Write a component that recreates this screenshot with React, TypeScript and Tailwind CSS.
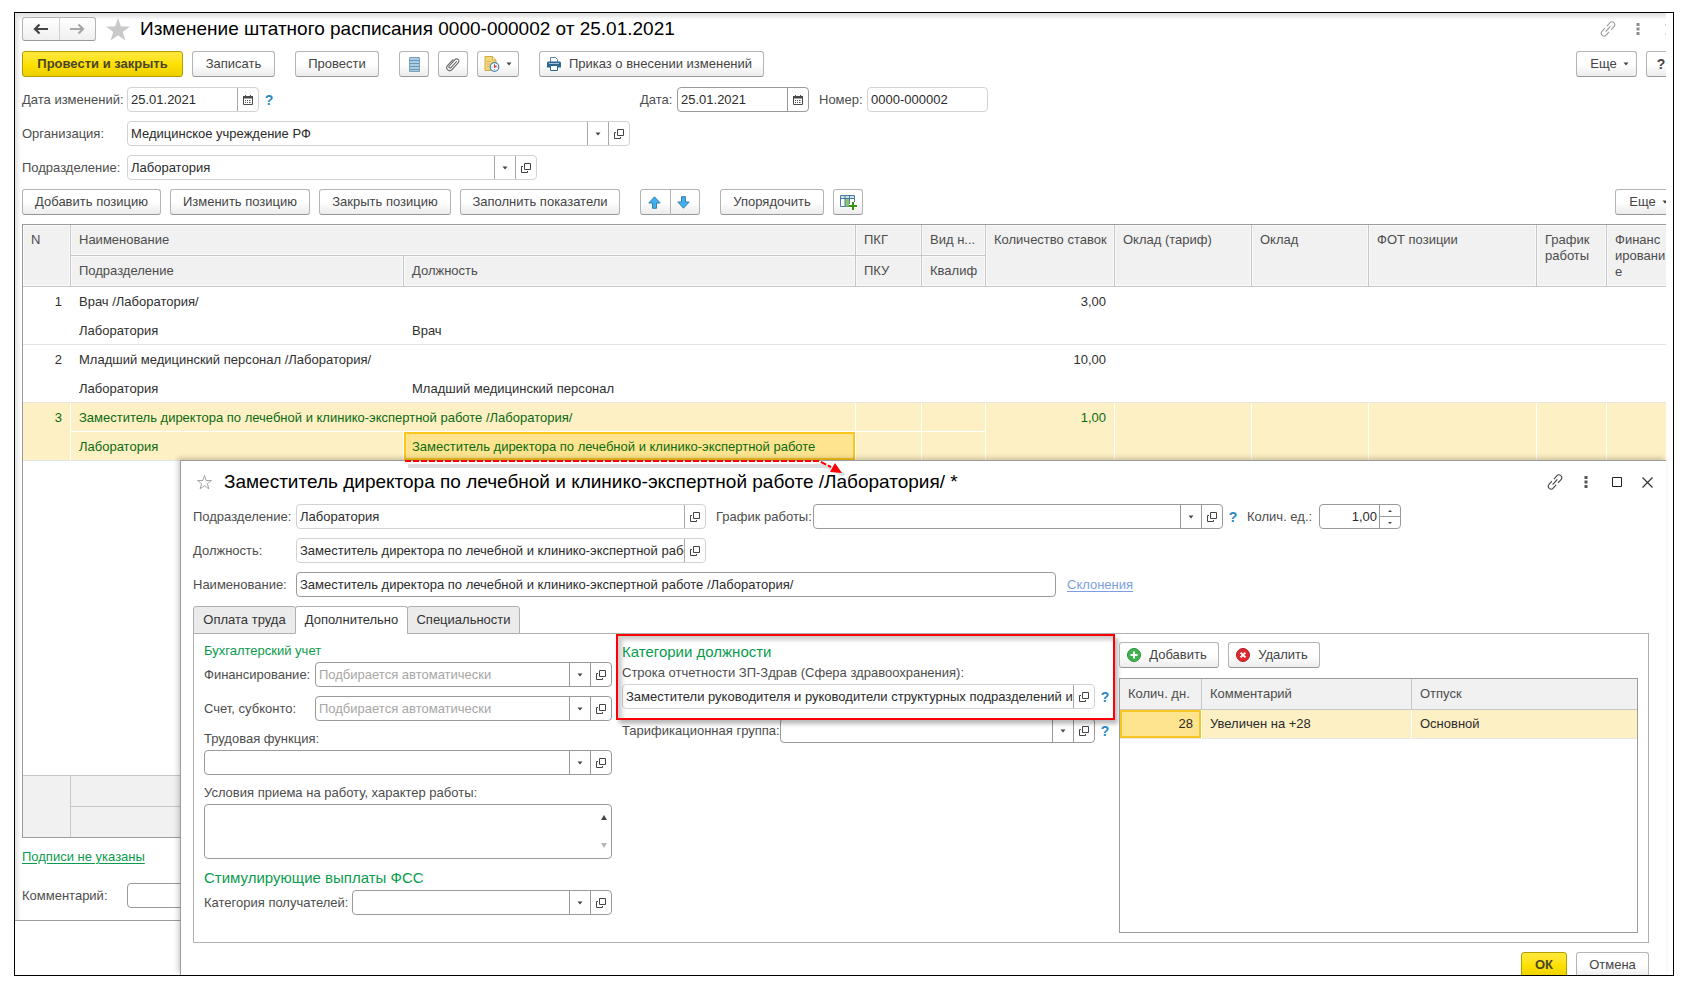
import React, { useId } from "react";
import clsx from "clsx";

function OpenIcon() {
  return (
    <svg width="10" height="10" viewBox="0 0 10 10" fill="none" stroke="#444" strokeWidth="1" aria-hidden="true">
      <path d="M3.5 .5h6v6h-6z" />
      <path d="M2 3.5H.5v6h6V8" />
    </svg>
  );
}

function Caret({ up = false, light = false }: { up?: boolean; light?: boolean }) {
  return (
    <svg width="6" height="4" viewBox="0 0 6 4" fill={light ? "#b5b5b5" : "#444"} aria-hidden="true">
      {up ? <path d="M.5 3.5h5L3 .5z" /> : <path d="M.5 .5h5L3 3.5z" />}
    </svg>
  );
}

function ScrollCaret({ up = false }: { up?: boolean }) {
  return (
    <svg width="6" height="5" viewBox="0 0 6 5" fill={up ? "#444" : "#b5b5b5"} aria-hidden="true">
      {up ? <path d="M0 5h6L3 0z" /> : <path d="M0 0h6L3 5z" />}
    </svg>
  );
}

function TinyCaret({ up = false }: { up?: boolean }) {
  return (
    <svg width="4" height="2" viewBox="0 0 4 2" fill="#444" aria-hidden="true">
      {up ? <path d="M0 2h4L2 0z" /> : <path d="M0 0h4L2 2z" />}
    </svg>
  );
}

function CalendarIcon() {
  return (
    <svg width="10" height="10" viewBox="0 0 10 10" aria-hidden="true">
      <path d="M.5 2h9v7.500h-9z" fill="#fff" stroke="#4a4a4a" />
      <path d="M0 1h10v2.500H0z" fill="#4a4a4a" />
      <path d="M2 0h1v1H2zM7 0h1v1H7z" fill="#4a4a4a" />
      <path d="M2 5h1v1H2zm2 0h1v1H4zm2 0h1v1H6zm1.500 0h.5v1h-.5zM2 7h1v1H2zm2 0h1v1H4zm2 0h1v1H6zm1.500 0h.5v1h-.5z" fill="#4a4a4a" />
    </svg>
  );
}

function LinkIcon({ light = false }: { light?: boolean }) {
  return (
    <svg width="16" height="16" viewBox="0 0 16 16" fill="none" stroke={light ? "#9a9a9a" : "#444"} strokeWidth="1.100" aria-hidden="true">
      <g transform="rotate(-48 8 8)">
        <path d="M6.500 5.200H2.200a2.800 2.800 0 0 0 0 5.600h4.300" />
        <path d="M9.500 5.200h4.300a2.800 2.800 0 0 1 0 5.600H9.500" />
        <path d="M4.500 8h7" />
      </g>
    </svg>
  );
}

function DotsIcon({ light = false }: { light?: boolean }) {
  return (
    <svg width="4" height="12" viewBox="0 0 4 12" fill={light ? "#8c8c8c" : "#555"} aria-hidden="true">
      <path d="M.5 0h3v3h-3zM.5 4.500h3v3h-3zM.5 9h3v3h-3z" />
    </svg>
  );
}

function CloseIcon({ light = false }: { light?: boolean }) {
  return (
    <svg width="11" height="11" viewBox="0 0 11 11" stroke={light ? "#9a9a9a" : "#333"} strokeWidth="1.200" aria-hidden="true">
      <path d="M.5 .5l10 10M10.500 .5l-10 10" />
    </svg>
  );
}

function ArrowIcon({ right = false }: { right?: boolean }) {
  return (
    <svg width="15" height="12" viewBox="0 0 15 12" fill="none" stroke={right ? "#a8a8a8" : "#444"} strokeWidth="2.200" aria-hidden="true">
      {right ? <path d="M0 6h13M8.500 1.500L13 6l-4.500 4.500" /> : <path d="M15 6H2M6.500 1.500L2 6l4.500 4.500" />}
    </svg>
  );
}

function MoveIcon({ down = false }: { down?: boolean }) {
  return (
    <svg width="13" height="13" viewBox="0 0 13 13" fill="#3fb0f0" stroke="#3a7eac" strokeWidth="1" strokeLinejoin="round" aria-hidden="true">
      {down ? <path d="M4.500 .7h4v5.300h3.700L6.500 12.200.8 6h3.700z" /> : <path d="M4.500 12.300h4V7h3.700L6.500.8.8 7h3.700z" />}
    </svg>
  );
}

function ListIcon() {
  return (
    <svg width="11" height="15" viewBox="0 0 11 15" aria-hidden="true">
      <path d="M.5 .5h10v14H.5z" fill="#a9cbe3" stroke="#7ba0ba" />
      <path d="M1 3.500h9M1 6.500h9M1 9.500h9M1 12.500h9" stroke="#6b95b2" />
    </svg>
  );
}

function ClipIcon() {
  return (
    <svg width="14" height="15" viewBox="0 0 14 15" fill="none" stroke="#666" strokeWidth="1.100" strokeLinecap="round" aria-hidden="true">
      <path d="M10.500 4.500L5 10.600a1.200 1.200 0 0 1-1.800-1.600L9 2.600a2.200 2.200 0 0 1 3.300 3L6 12.700a3 3 0 0 1-4.500-4L7 2.600" />
    </svg>
  );
}

function DocClockIcon() {
  return (
    <svg width="16" height="16" viewBox="0 0 16 16" fill="none" aria-hidden="true">
      <path d="M1 .5h7.500l3.500 3.500v10.500H1z" fill="#f4d678" stroke="#d0ab4a" />
      <path d="M8.500 .5v3.500H12" fill="#fff3c4" stroke="#d0ab4a" />
      <path d="M3 5.500h4M3 8h3M3 10.500h2" stroke="#d8b75a" />
      <circle cx="10.500" cy="11" r="4.300" fill="#fff" stroke="#4a86b2" strokeWidth="1.200" />
      <path d="M10.500 8v1.200M10.500 13v1.200M7.500 11h1.200M12.500 11h1" stroke="#4a86b2" strokeWidth=".8" />
      <path d="M10.500 11.500V9M10.500 11.500l2-2" stroke="#e0323c" strokeWidth="1.100" />
    </svg>
  );
}

function PrinterIcon() {
  return (
    <svg width="14" height="14" viewBox="0 0 14 14" aria-hidden="true">
      <path d="M3.500 5V.5h5l2 2V5" fill="#fff" stroke="#5c88a8" />
      <path d="M1.500 4.500h11A1.500 1.500 0 0 1 14 6v4.500h-3V8.500H3v2H0V6a1.500 1.500 0 0 1 1.500-1.500z" fill="#2f6690" />
      <path d="M2 6.500h10" stroke="#9fc3dc" />
      <path d="M3.500 8.500h7v5h-7z" fill="#fff" stroke="#2f6690" />
    </svg>
  );
}

function ColumnsPlusIcon() {
  return (
    <svg width="17" height="15" viewBox="0 0 17 15" aria-hidden="true">
      <path d="M.5 .5h14v11H.5z" fill="#fff" stroke="#4a7da3" />
      <path d="M1 1h13v2H1z" fill="#cfe0ec" />
      <path d="M5 3.500h4.500v8H5z" fill="#8ac46a" />
      <path d="M1 3.500h14M5 1v11M9.500 1v11" stroke="#4a7da3" />
      <path d="M13 7v8M9 11h8" stroke="#fff" strokeWidth="4" />
      <path d="M13 7v8M9 11h8" stroke="#35930f" strokeWidth="2" />
    </svg>
  );
}

function AddIcon() {
  return (
    <svg width="14" height="14" viewBox="0 0 14 14" aria-hidden="true">
      <circle cx="7" cy="7" r="6.500" fill="#3fb24c" stroke="#2c8f3a" />
      <path d="M7 3.500v7M3.500 7h7" stroke="#fff" strokeWidth="2" />
    </svg>
  );
}

function RemoveIcon() {
  return (
    <svg width="14" height="14" viewBox="0 0 14 14" aria-hidden="true">
      <circle cx="7" cy="7" r="6.500" fill="#dc2a30" stroke="#b01c22" />
      <path d="M4.600 4.600l4.800 4.800M9.400 4.600L4.600 9.400" stroke="#fff" strokeWidth="2" />
    </svg>
  );
}

function Button({
  children,
  primary = false,
  className,
  label,
}: {
  children: React.ReactNode;
  primary?: boolean;
  className?: string;
  label?: string;
}) {
  return (
    <button
      type="button"
      aria-label={label}
      className={clsx(
        "flex h-[26px] shrink-0 items-center justify-center whitespace-nowrap rounded-[3px] border",
        primary
          ? "border-[#b39b00] bg-linear-to-b from-[#ffe83b] via-[#ffe100] to-[#ecd000] font-bold text-[#4a4526]"
          : "border-[#b4b4b4] border-b-[#989898] bg-linear-to-b from-white from-50% to-[#ececec] text-[#444]",
        className,
      )}
    >
      {children}
    </button>
  );
}

type FieldProps = {
  label?: string;
  labelClass?: string;
  boxClass?: string;
  stacked?: boolean;
  value?: string;
  placeholder?: string;
  soft?: boolean;
  calendar?: boolean;
  drop?: boolean;
  open?: boolean;
  spin?: boolean;
};

function Field({ label, labelClass, boxClass, stacked, value, placeholder, soft, calendar, drop, open, spin }: FieldProps) {
  const id = useId();
  const part = clsx("flex w-[21px] shrink-0 items-center justify-center border-l", soft ? "border-[#a8a8a8]" : "border-[#9a9a9a]");
  return (
    <div className={stacked ? "flex flex-col gap-[3px] pt-px" : "flex items-center"}>
      <label htmlFor={id} className={clsx("shrink-0 whitespace-nowrap", labelClass)}>
        {label}
      </label>
      <div className={clsx("flex h-[25px] overflow-hidden rounded border bg-white", soft ? "border-[#d2d2d2]" : "border-[#9a9a9a]", boxClass)}>
        <input
          id={id}
          defaultValue={value}
          placeholder={placeholder}
          className={clsx("min-w-0 flex-1 bg-transparent text-[#2b2b2b] outline-none placeholder:text-[#a6a6a6]", spin ? "pr-0.5 text-right" : "pl-[3px]")}
        />
        {calendar && (
          <button type="button" aria-label="Календарь" className={part}>
            <CalendarIcon />
          </button>
        )}
        {drop && (
          <button type="button" aria-label="Выбрать" className={part}>
            <Caret />
          </button>
        )}
        {open && (
          <button type="button" aria-label="Открыть" className={part}>
            <OpenIcon />
          </button>
        )}
        {spin && (
          <div className="flex w-[21px] shrink-0 flex-col border-l border-[#9a9a9a]">
            <button type="button" aria-label="Больше" className="flex flex-1 items-center justify-center border-b border-[#9a9a9a]">
              <TinyCaret up />
            </button>
            <button type="button" aria-label="Меньше" className="flex flex-1 items-center justify-center">
              <TinyCaret />
            </button>
          </div>
        )}
      </div>
    </div>
  );
}

function Help() {
  return (
    <button type="button" aria-label="Справка" className="w-5 shrink-0 text-center text-sm font-bold text-[#2b88c8]">
      ?
    </button>
  );
}

const positions = [
  { n: 1, name: "Врач /Лаборатория/", unit: "Лаборатория", post: "Врач", rate: "3,00" },
  { n: 2, name: "Младший медицинский персонал /Лаборатория/", unit: "Лаборатория", post: "Младший медицинский персонал", rate: "10,00" },
  {
    n: 3,
    name: "Заместитель директора по лечебной и клинико-экспертной работе /Лаборатория/",
    unit: "Лаборатория",
    post: "Заместитель директора по лечебной и клинико-экспертной работе",
    rate: "1,00",
    selected: true,
  },
];

function StaffTable() {
  const head = "border-r border-b border-[#c6c6c6] bg-[#f1f1f1] px-2 text-left font-normal whitespace-nowrap text-[#4d4d4d] shadow-[inset_0_0_0_1px_#fafafa]";
  const tall = clsx(head, "pt-[7px] align-top");
  return (
    <table className="w-full table-fixed border-separate border-spacing-0 border-t border-b border-l border-[#9c9c9c]">
      <colgroup>
        <col className="w-[48px]" />
        <col className="w-[333px]" />
        <col />
        <col className="w-[66px]" />
        <col className="w-[64px]" />
        <col className="w-[129px]" />
        <col className="w-[137px]" />
        <col className="w-[117px]" />
        <col className="w-[168px]" />
        <col className="w-[70px]" />
        <col className="w-[69px]" />
      </colgroup>
      <thead>
        <tr className="h-[31px]">
          <th rowSpan={2} className={tall}>N</th>
          <th colSpan={2} className={head}>Наименование</th>
          <th className={head}>ПКГ</th>
          <th className={head}>Вид н...</th>
          <th rowSpan={2} className={tall}>Количество ставок</th>
          <th rowSpan={2} className={tall}>Оклад (тариф)</th>
          <th rowSpan={2} className={tall}>Оклад</th>
          <th rowSpan={2} className={tall}>ФОТ позиции</th>
          <th rowSpan={2} className={tall}>График<br />работы</th>
          <th rowSpan={2} className={tall}>Финанс<br />ировани<br />е</th>
        </tr>
        <tr className="h-[31px]">
          <th className={head}>Подразделение</th>
          <th className={head}>Должность</th>
          <th className={head}>ПКУ</th>
          <th className={head}>Квалиф</th>
        </tr>
      </thead>
      <tbody>
        {positions.map((p) => {
          const first = p.selected
            ? "border-r border-b border-white bg-[#fdf0c4] px-2 pt-0.5 text-[#0b6b12]"
            : "px-2 pt-px text-[#2f2f2f]";
          const last = p.selected
            ? "border-r border-r-white border-b border-b-[#e4e4e4] bg-[#fdf0c4] px-2 pt-0.5 text-[#0b6b12]"
            : "border-b border-[#e4e4e4] px-2 pt-0.5 text-[#2f2f2f]";
          const number = p.selected
            ? "border-r border-r-white border-b border-b-[#e4e4e4] bg-[#fdf0c4] pt-[7px] pr-2 text-right align-top text-[#0b6b12]"
            : "border-b border-[#e4e4e4] pt-[7px] pr-[9px] text-right align-top text-[#2f2f2f]";
          return (
            <React.Fragment key={p.n}>
              <tr className="h-[29px]">
                <td rowSpan={2} className={number}>{p.n}</td>
                <td colSpan={2} className={first}>{p.name}</td>
                <td className={first} />
                <td className={first} />
                <td rowSpan={2} className={number}>{p.rate}</td>
                <td rowSpan={2} className={last} />
                <td rowSpan={2} className={last} />
                <td rowSpan={2} className={last} />
                <td rowSpan={2} className={last} />
                <td rowSpan={2} className={last} />
              </tr>
              <tr className="h-[29px]">
                <td className={last}>{p.unit}</td>
                <td className={clsx(last, p.selected && "shadow-[inset_0_0_0_2px_#f8c61e] bg-[#ffe48f]")}>{p.post}</td>
                <td className={last} />
                <td className={last} />
              </tr>
            </React.Fragment>
          );
        })}
        <tr className="h-[314px]">
          <td colSpan={11} />
        </tr>
      </tbody>
      <tfoot>
        <tr className="h-[31px]">
          <td rowSpan={2} className="border-t border-r border-[#c6c6c6] bg-[#f1f1f1]" />
          <td colSpan={10} className="border-t border-[#c6c6c6] bg-[#f1f1f1]" />
        </tr>
        <tr className="h-[31px]">
          <td colSpan={10} className="border-t border-[#c6c6c6] bg-[#f1f1f1]" />
        </tr>
      </tfoot>
    </table>
  );
}

function MainWindow() {
  return (
    <div className="mr-[7px] overflow-hidden border-b border-[#9c9c9c] pb-3 pl-[7px] shadow-[inset_4px_5px_4px_-1px_#e2e2e2]">
      <div className="-mr-[10px]">
        <div className="flex h-7 items-center pt-1">
          <div className="flex h-6 w-[74px] shrink-0 rounded-[3px] border border-[#b4b4b4] border-b-[#989898] bg-linear-to-b from-white to-[#f0f0f0]">
            <button type="button" aria-label="Назад" className="flex flex-1 items-center justify-center border-r border-[#d0d0d0]">
              <ArrowIcon />
            </button>
            <button type="button" aria-label="Вперед" className="flex flex-1 items-center justify-center">
              <ArrowIcon right />
            </button>
          </div>
          <button type="button" aria-label="В избранное" className="ml-[10px] shrink-0">
            <svg width="24" height="23" viewBox="0 0 24 23" fill="#c9c9c9" aria-hidden="true">
              <path d="M12 0l2.900 8.500H24l-7.300 5.400 2.800 8.800L12 17.300l-7.500 5.400 2.800-8.800L0 8.500h9.100z" />
            </svg>
          </button>
          <h1 className="ml-[10px] flex-1 whitespace-nowrap text-[19px] leading-6 text-black">Изменение штатного расписания 0000-000002 от 25.01.2021</h1>
          <button type="button" aria-label="Ссылка"><LinkIcon light /></button>
          <button type="button" aria-label="Меню" className="ml-5"><DotsIcon light /></button>
          <button type="button" aria-label="Закрыть" className="ml-[25px]"><CloseIcon light /></button>
        </div>

        <div className="mt-[10px] flex">
          <Button primary className="w-[161px]">Провести и закрыть</Button>
          <Button className="ml-[9px] w-[83px]">Записать</Button>
          <Button className="ml-5 w-[84px]">Провести</Button>
          <Button className="ml-5 w-[30px]" label="Список"><ListIcon /></Button>
          <Button className="ml-[9px] w-[30px]" label="Файлы"><ClipIcon /></Button>
          <Button className="ml-[9px] w-[42px] gap-1.5" label="Напоминание"><DocClockIcon /><Caret /></Button>
          <Button className="ml-5 w-[225px] gap-2 pr-1"><PrinterIcon />Приказ о внесении изменений</Button>
          <Button className="ml-auto w-[61px] gap-1.5 pl-1.5">Еще<Caret /></Button>
          <Button className="ml-[9px] w-[30px] text-sm font-bold">?</Button>
        </div>

        <div className="mt-[10px] flex flex-col gap-[9px]">
          <div className="flex">
            <div className="flex w-[618px]">
              <Field label="Дата изменений:" labelClass="w-[105px]" boxClass="w-[132px]" value="25.01.2021" soft calendar />
              <Help />
            </div>
            <Field label="Дата:" labelClass="w-[37px]" boxClass="w-[132px]" value="25.01.2021" calendar />
            <div className="ml-[10px]">
              <Field label="Номер:" labelClass="w-[48px]" boxClass="w-[121px]" value="0000-000002" soft />
            </div>
          </div>
          <Field label="Организация:" labelClass="w-[105px]" boxClass="w-[503px]" value="Медицинское учреждение РФ" soft drop open />
          <Field label="Подразделение:" labelClass="w-[105px]" boxClass="w-[410px]" value="Лаборатория" soft drop open />
        </div>

        <div className="my-[9px] flex">
          <Button className="w-[139px]">Добавить позицию</Button>
          <Button className="ml-[9px] w-[140px]">Изменить позицию</Button>
          <Button className="ml-[9px] w-[132px]">Закрыть позицию</Button>
          <Button className="ml-[9px] w-[160px]">Заполнить показатели</Button>
          <Button className="ml-5 w-[31px] rounded-r-none pr-0.5" label="Вверх"><MoveIcon /></Button>
          <Button className="-ml-px w-[30px] rounded-l-none pr-1" label="Вниз"><MoveIcon down /></Button>
          <Button className="ml-5 w-[104px]">Упорядочить</Button>
          <Button className="ml-[9px] w-[30px]" label="Показатели"><ColumnsPlusIcon /></Button>
          <Button className="ml-auto w-[61px] gap-1.5 pl-1.5">Еще<Caret /></Button>
        </div>

        <StaffTable />

        <a href="#signatures" className="mt-[11px] block w-fit text-[#0a9b4d] underline underline-offset-2">Подписи не указаны</a>
        <div className="mt-[18px]">
          <Field label="Комментарий:" labelClass="w-[105px]" boxClass="w-[503px]" />
        </div>
      </div>
    </div>
  );
}

function Tab({ children, active = false, className }: { children: string; active?: boolean; className: string }) {
  return (
    <button
      type="button"
      role="tab"
      aria-selected={active}
      className={clsx(
        "h-7 rounded-t-[3px] border text-[#333]",
        active ? "border-[#b0b0b0] border-b-white bg-white" : "border-[#b0b0b0] bg-[#ebebeb]",
        className,
      )}
    >
      {children}
    </button>
  );
}

function AccountingColumn() {
  const id = useId();
  return (
    <div className="flex w-[408px] shrink-0 flex-col pt-[9px]">
      <h3 className="mb-[3px] text-[#0a9b4d]">Бухгалтерский учет</h3>
      <div className="mb-[10px] flex flex-col gap-[9px]">
        <Field label="Финансирование:" labelClass="w-[111px]" boxClass="flex-1" placeholder="Подбирается автоматически" drop open />
        <Field label="Счет, субконто:" labelClass="w-[111px]" boxClass="flex-1" placeholder="Подбирается автоматически" drop open />
        <Field label="Трудовая функция:" stacked drop open />
      </div>
      <label htmlFor={id} className="mb-[3px]">Условия приема на работу, характер работы:</label>
      <div className="flex h-[55px] rounded border border-[#9a9a9a]">
        <textarea id={id} className="min-w-0 flex-1 resize-none outline-none" />
        <div className="flex w-3.5 flex-col items-center justify-between py-[10px]">
          <ScrollCaret up />
          <ScrollCaret />
        </div>
      </div>
      <h2 className="mt-[9px] mb-0.5 text-[15px] leading-5 text-[#0a9b4d]">Стимулирующие выплаты ФСС</h2>
      <Field label="Категория получателей:" labelClass="w-[148px]" boxClass="flex-1" drop open />
    </div>
  );
}

function CategoryColumn() {
  return (
    <div className="flex w-[493px] shrink-0 flex-col gap-[9px] pt-2">
      <div className="relative">
        <h2 className="mb-0.5 text-[15px] leading-5 text-[#0a9b4d]">Категории должности</h2>
        <div className="flex items-end">
          <div className="w-[473px]">
            <Field label="Строка отчетности ЗП-Здрав (Сфера здравоохранения):" stacked value="Заместители руководителя и руководители структурных подразделений и:" soft open />
          </div>
          <div className="flex h-[25px] items-center"><Help /></div>
        </div>
        <div className="pointer-events-none absolute -top-2 right-0 -bottom-[11px] -left-1.5 border-2 border-[#fb0007] shadow-[3px_4px_4px_#0004,inset_4px_4px_4px_#0003]" />
      </div>
      <div className="flex">
        <Field label="Тарификационная группа:" labelClass="w-[158px]" boxClass="w-[315px]" drop open />
        <Help />
      </div>
    </div>
  );
}

function VacationColumn() {
  const head = "border-r border-b border-[#c6c6c6] bg-[#f1f1f1] px-2 text-left font-normal text-[#4d4d4d] last:border-r-0";
  const cell = "border-r border-b border-r-white border-b-[#e8e8e8] bg-[#fdf0c4] px-2 text-[#2b2b2b] last:border-r-0";
  return (
    <div className="relative -ml-1.5 flex min-w-0 flex-1 flex-col pt-2">
      <div className="mb-[10px] flex gap-[9px]">
        <Button className="w-[100px] gap-2 pr-1"><AddIcon />Добавить</Button>
        <Button className="w-[92px] gap-2 pr-1"><RemoveIcon />Удалить</Button>
      </div>
      <div className="h-[255px] border border-[#9c9c9c]">
        <table className="w-full table-fixed border-separate border-spacing-0">
          <colgroup>
            <col className="w-[82px]" />
            <col className="w-[210px]" />
            <col />
          </colgroup>
          <thead>
            <tr className="h-[31px]">
              <th className={clsx(head, "whitespace-nowrap")}>Колич. дн.</th>
              <th className={head}>Комментарий</th>
              <th className={head}>Отпуск</th>
            </tr>
          </thead>
          <tbody>
            <tr className="h-[29px]">
              <td className={clsx(cell, "text-right shadow-[inset_0_0_0_2px_#f8c61e] bg-[#ffe48f]")}>28</td>
              <td className={cell}>Увеличен на +28</td>
              <td className={cell}>Основной</td>
            </tr>
          </tbody>
        </table>
      </div>
    </div>
  );
}

function PositionDialog() {
  return (
    <section
      role="dialog"
      aria-labelledby="dialog-title"
      className="absolute top-[447px] right-[7px] bottom-0 left-[165px] border-t border-l border-[#9c9c9c] bg-white pt-[9px] pr-[17px] pl-3 shadow-[-2px_-2px_5px_#0003]"
    >
      <div className="mb-[10px] flex h-6 items-center">
        <button type="button" aria-label="В избранное" className="ml-[3px]">
          <svg width="17" height="17" viewBox="0 0 17 17" fill="none" stroke="#a6a6a6" aria-hidden="true">
            <path d="M8.500 1.500l1.700 5h5.300l-4.200 3.200 1.600 5.200-4.400-3.200-4.400 3.200 1.600-5.200L1.500 6.500h5.300z" />
          </svg>
        </button>
        <h1 id="dialog-title" className="ml-[11px] flex-1 whitespace-nowrap text-[19px] leading-6 text-black">
          Заместитель директора по лечебной и клинико-экспертной работе /Лаборатория/ *
        </h1>
        <div className="-mr-1 flex items-center">
          <button type="button" aria-label="Ссылка"><LinkIcon /></button>
          <button type="button" aria-label="Меню" className="ml-[21px]"><DotsIcon /></button>
          <button type="button" aria-label="Развернуть" className="ml-6">
            <svg width="10" height="10" viewBox="0 0 10 10" fill="none" stroke="#222" aria-hidden="true"><path d="M.5 .5h9v9h-9z" /></svg>
          </button>
          <button type="button" aria-label="Закрыть" className="ml-5"><CloseIcon /></button>
        </div>
      </div>

      <div className="flex flex-col gap-[9px]">
        <div className="flex">
          <Field label="Подразделение:" labelClass="w-[103px]" boxClass="w-[410px]" value="Лаборатория" soft open />
          <div className="ml-[10px]">
            <Field label="График работы:" labelClass="w-[97px]" boxClass="w-[410px]" drop open />
          </div>
          <Help />
          <div className="ml-1">
            <Field label="Колич. ед.:" labelClass="w-[72px]" boxClass="w-[82px]" value="1,00" spin />
          </div>
        </div>
        <Field label="Должность:" labelClass="w-[103px]" boxClass="w-[410px]" value="Заместитель директора по лечебной и клинико-экспертной работе" soft open />
        <div className="flex items-center">
          <Field label="Наименование:" labelClass="w-[103px]" boxClass="w-[760px]" value="Заместитель директора по лечебной и клинико-экспертной работе /Лаборатория/" />
          <a href="#declension" className="ml-[11px] text-[#7b9fe0] underline underline-offset-2">Склонения</a>
        </div>
      </div>

      <div role="tablist" className="relative mt-[9px] -mb-px flex">
        <Tab className="w-[103px]">Оплата труда</Tab>
        <Tab active className="-ml-px w-[113px]">Дополнительно</Tab>
        <Tab className="-ml-px w-[113px]">Специальности</Tab>
      </div>
      <div className="flex gap-[10px] border border-[#b0b0b0] px-[10px] pb-[9px]">
        <AccountingColumn />
        <CategoryColumn />
        <VacationColumn />
      </div>

      <div className="mt-[9px] flex justify-end gap-[9px]">
        <Button primary className="w-[46px]">ОК</Button>
        <Button className="w-[73px]">Отмена</Button>
      </div>
    </section>
  );
}

export default function App() {
  return (
    <main className="bg-white pt-3 pr-3 pl-3.5 font-['Liberation_Sans',Arial,sans-serif] text-[13px] leading-4 text-[#4d4d4d]">
      <div className="relative overflow-hidden border border-black pb-[54px]">
        <MainWindow />
        <PositionDialog />
        <svg width="450" height="26" viewBox="0 0 450 26" fill="none" className="pointer-events-none absolute top-[442px] left-[389px]" aria-hidden="true">
          <path d="M4 11h418l18 9" stroke="#000" strokeOpacity=".13" strokeWidth="4" />
          <path d="M1 6h414l12 6" stroke="#fb0007" strokeWidth="2" strokeDasharray="6 2" />
          <path d="M438 18l-12-1 5-9z" fill="#fb0007" />
        </svg>
      </div>
    </main>
  );
}
